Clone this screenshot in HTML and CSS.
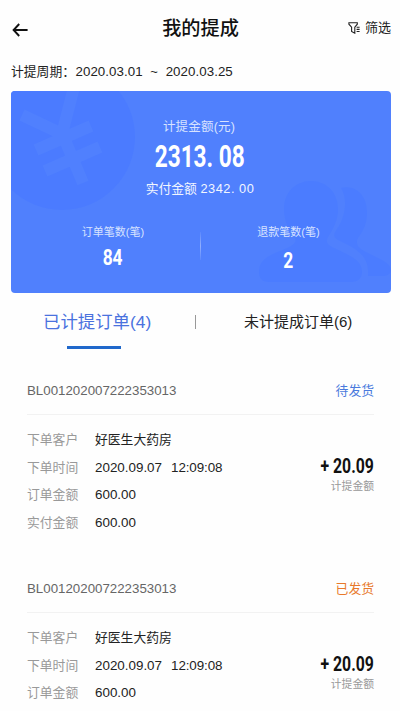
FILE: index.html
```html
<!DOCTYPE html>
<html lang="zh-CN">
<head>
<meta charset="utf-8">
<title>我的提成</title>
<link rel="stylesheet" href="styles.css">
</head>
<body>
<header class="nav">
  <svg class="back" viewBox="0 0 16 14" fill="none" stroke="#111" stroke-width="1.9"><path d="M7.2 1 1.6 7l5.6 6M1.8 7H15.6"/></svg>
  <h1 class="title">我的提成</h1>
  <div class="filter">
    <svg class="funnel" viewBox="0 0 12 12" fill="none" stroke="#222" stroke-width="1.1"><path d="M.9.8h8.4v1.4L6.8 5.2v6L3.6 9.4V5.2L.9 2.2zM8.6 5.3h3M8.6 7.4h3M8.6 9.5h3"/></svg>
    <span>筛选</span>
  </div>
</header>
<div class="period"><span class="period-label">计提周期：</span><span class="date">2020.03.01</span><span class="tilde">~</span><span class="date">2020.03.25</span></div>
<section class="card">
  <svg class="deco" viewBox="0 0 380 202">
    <circle cx="51" cy="46" r="73" fill="#4b7bff"/>
    <g stroke="#5080fe" stroke-width="12" fill="none">
      <path d="M11 24 51 43 63-4M51 42 72 92M25 59 80 35M34 80 89 56"/>
    </g>
    <g fill="#4b7cff">
      <path d="M330 97c15-4 26 8 26 24 0 14-5 20-9 26-4 8 3 12 14 17 13 6 19 10 19 15 0 4-4 6-9 6h-14c2-22-14-28-30-36-7-4-3-8 1-14 6-10 9-27 2-38z"/>
      <path d="M300 90c16 0 27 12 27 28 0 12-5 20-10 28-3 6 0 8 6 11 14 7 28 11 28 24 0 6-4 10-11 10h-82c-7 0-10-4-10-10 0-14 12-17 28-24 9-4 10-7 7-12-5-7-10-14-10-27 0-16 11-28 27-28z"/>
    </g>
  </svg>
  <div class="label">计提金额(元)</div>
  <div class="total"><span class="narrow">2313. 08</span></div>
  <div class="paid">实付金额&nbsp;<span>2342. 00</span></div>
  <div class="stats">
    <div class="stat"><div class="stat-label">订单笔数(笔)</div><div class="stat-num"><span class="narrow">84</span></div></div>
    <div class="split"></div>
    <div class="stat"><div class="stat-label">退款笔数(笔)</div><div class="stat-num low"><span class="narrow">2</span></div></div>
  </div>
</section>
<nav class="tabs">
  <div class="tab active">已计提订单(4)</div>
  <div class="bar"></div>
  <div class="tab">未计提成订单(6)</div>
</nav>
<main class="orders">
  <article class="order">
    <div class="order-head"><span class="no">BL001202007222353013</span><span class="state wait">待发货</span></div>
    <div class="order-body">
      <dl class="fields">
        <dt>下单客户</dt><dd class="cn">好医生大药房</dd>
        <dt>下单时间</dt><dd>2020.09.07<span class="time">12:09:08</span></dd>
        <dt>订单金额</dt><dd>600.00</dd>
        <dt>实付金额</dt><dd>600.00</dd>
      </dl>
      <div class="gain"><div class="gain-num"><span class="narrow">+ 20.09</span></div><div class="gain-label">计提金额</div></div>
    </div>
  </article>
  <article class="order">
    <div class="order-head"><span class="no">BL001202007222353013</span><span class="state sent">已发货</span></div>
    <div class="order-body">
      <dl class="fields">
        <dt>下单客户</dt><dd class="cn">好医生大药房</dd>
        <dt>下单时间</dt><dd>2020.09.07<span class="time">12:09:08</span></dd>
        <dt>订单金额</dt><dd>600.00</dd>
      </dl>
      <div class="gain"><div class="gain-num"><span class="narrow">+ 20.09</span></div><div class="gain-label">计提金额</div></div>
    </div>
  </article>
</main>
</body>
</html>
```
FILE: styles.css
```css
* { box-sizing: border-box; }
body {
  margin: 0;
  background: #fefefe;
  color: #222;
  font-family: "Liberation Sans", "Noto Sans CJK SC", sans-serif;
  font-size: 13px;
  white-space: nowrap;
}
.nav {
  height: 56px;
  display: grid;
  grid-template-columns: 1fr auto 1fr;
  align-items: center;
  padding: 0 9px 0 11px;
}
.back { width: 16px; height: 14px; margin: 4px 0 0 1px; }
.title { margin: 1px 0 0 -1px; font-size: 19.2px; line-height: 28px; font-weight: 500; color: #111; }
.filter { display: flex; align-items: center; justify-content: flex-end; gap: 5px; line-height: 20px; }
.funnel { width: 12px; height: 12px; }
.period { height: 35px; padding: 6px 0 0 11px; line-height: 20px; display: flex; }
.period-label { width: 64.5px; font-size: 12.8px; }
.date { font-size: 13.3px; letter-spacing: .06px; }
.tilde { width: 23px; text-align: center; }
.card {
  position: relative;
  height: 202px;
  margin: 0 9px 0 11px;
  padding-top: 26px;
  border-radius: 4px;
  overflow: hidden;
  background: #5080fd;
  color: #fff;
  text-align: center;
}
.deco { position: absolute; inset: 0; width: 100%; height: 100%; }
.card > div { position: relative; }
.label { font-size: 12.5px; line-height: 20px; color: #d8e3ff; right: 2px; letter-spacing: .2px; }
.narrow { display: inline-block; font-family: Roboto, sans-serif; font-weight: 700; }
.total { height: 41px; line-height: 40px; font-size: 31px; right: 1px; }
.total .narrow { transform: scaleX(.73); }
.paid { line-height: 22px; font-size: 12.8px; color: #f2f6ff; right: 1px; }
.paid span { letter-spacing: .5px; }
.stats { display: grid; grid-template-columns: 174px 1px 175px; margin: 22px 0 0 15px; }
.stat-label { font-size: 11px; line-height: 20px; color: #d8e3ff; }
.stat-num { font-size: 22px; line-height: 26px; padding-top: 3px; }
.stat-num.low { padding-top: 6px; }
.stat-num .narrow { transform: scaleX(.79); }
.split { width: 1px; height: 28px; margin-top: 10px; background: linear-gradient(#ffffff10, #ffffff60, #ffffff10); }
.tabs {
  height: 75px;
  display: grid;
  grid-template-columns: 107px 1px 109px;
  column-gap: 45px;
  padding: 14px 0 0 43px;
  line-height: 30px;
}
.tab { font-size: 15px; color: #222; }
.tabs .tab:last-child { margin-left: 3px; }
.tab.active { font-size: 17.4px; color: #4a72de; display: flex; flex-direction: column; }
.tab.active::after { content: ""; width: 54px; height: 3px; margin: 9px 0 0 24px; background: #2068cb; }
.bar { height: 14px; margin-top: 8px; background: #999; }
.orders { height: 343px; overflow: hidden; }
.order { padding: 0 26px 0 27px; height: 198px; }
.order-head {
  height: 47px;
  border-bottom: 1px solid #f2f2f2;
  display: flex;
  justify-content: space-between;
  padding-top: 12px;
  line-height: 22px;
}
.no { font-size: 13.3px; color: #666; }
.state { font-size: 12.8px; }
.wait { color: #4a7add; }
.sent { color: #e8792b; }
.order-body { display: flex; justify-content: space-between; padding-top: 11px; }
.fields { margin: 0; display: grid; grid-template-columns: 68px auto; grid-auto-rows: 27.7px; line-height: 28px; }
dt { color: #999; font-size: 12.8px; }
dd { margin: 0; font-size: 13.4px; }
dd.cn { font-size: 12.8px; }
.time { margin-left: 9px; letter-spacing: -.1px; }
.gain { padding-top: 28px; text-align: right; }
.gain-num { line-height: 25px; font-size: 19.5px; color: #111; }
.gain-num .narrow { transform: scaleX(.81); transform-origin: right; }
.gain-label { font-size: 10.8px; line-height: 15px; color: #999; }
```
